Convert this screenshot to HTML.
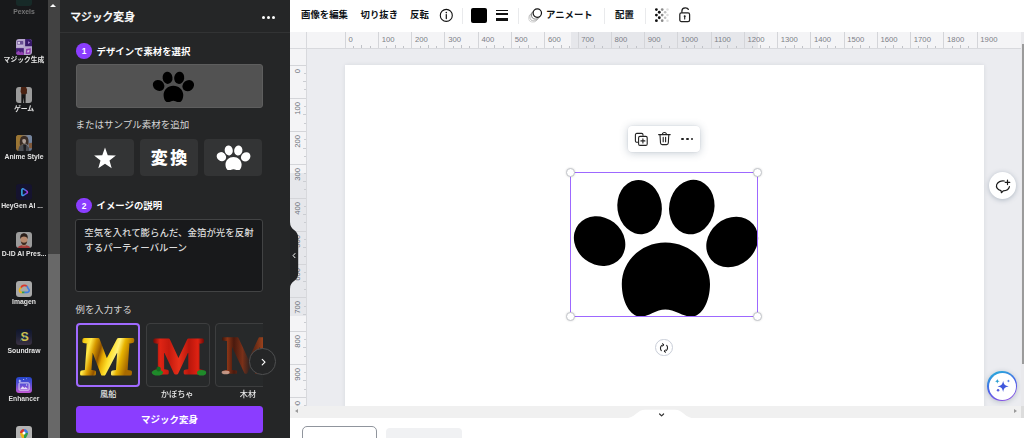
<!DOCTYPE html>
<html lang="ja"><head><meta charset="utf-8"><title>マジック変身</title>
<style>
*{box-sizing:border-box;margin:0;padding:0}
html,body{width:1024px;height:438px;overflow:hidden;background:#fff}
body{font-family:"Liberation Sans","Noto Sans CJK JP",sans-serif;color:#fff}
#app{position:relative;width:1024px;height:438px;overflow:hidden;background:#fff}
.abs{position:absolute}
/* sidebar */
#side{position:absolute;left:0;top:0;width:48.2px;height:438px;background:#18191b}
#sbar{position:absolute;left:48.2px;top:0;width:11.8px;height:438px;background:#424242}
#sbar .sth{position:absolute;left:0;top:254px;width:11.8px;height:184px;background:#686868}
#sbar .arr{position:absolute;left:2px;top:3.6px;width:0;height:0;border-left:3.7px solid transparent;border-right:3.7px solid transparent;border-bottom:3.8px solid #fff}
.it{position:absolute;left:0;width:49px;text-align:center}
.it .ic{position:absolute;left:16.1px;top:0;width:16.2px;height:16.2px;border-radius:3px;overflow:hidden}
.it .ic svg{position:absolute;left:0;top:0;width:16.2px;height:16.2px}
.it .lb{will-change:transform;position:absolute;left:-5.9px;width:60px;top:16.9px;font-size:6.8px;font-weight:700;line-height:9px;white-space:nowrap;color:#e4e4e4;text-align:center}
/* panel */
#panel{position:absolute;left:60px;top:0;width:230px;height:438px;background:#252627}
.ptitle{position:absolute;left:10.2px;top:9.1px;font-size:10.8px;line-height:16px;font-weight:500;-webkit-text-stroke:.25px #fff;color:#fff;white-space:nowrap}
.pdots{position:absolute;left:202px;top:15.6px;width:14px;height:3px}
.pdots i{position:absolute;top:0;width:3px;height:3px;border-radius:50%;background:#fff}
.pdots i:nth-child(1){left:0}.pdots i:nth-child(2){left:5px}.pdots i:nth-child(3){left:10px}
.psep{position:absolute;left:0;top:31.5px;width:230px;height:1.3px;background:#323334}
.step{position:absolute;left:16.2px;width:15.6px;height:15.6px;border-radius:50%;background:#8b3dff;color:#fff;font-size:8.4px;font-weight:700;line-height:17px;text-align:center}
.steplb{position:absolute;left:36.6px;font-size:9.4px;font-weight:700;line-height:14px;color:#fff;white-space:nowrap}
.upbox{position:absolute;left:15.6px;top:64px;width:187px;height:43.6px;background:#525252;border-radius:3px;border:1px solid #5e5e5e}
.sublb{position:absolute;left:15.6px;font-size:9.4px;line-height:13px;color:#d6d6d6;white-space:nowrap}
.sbtn{position:absolute;top:138.5px;width:58.4px;height:37.2px;border-radius:4px;background:#333435;overflow:hidden}
.henkan{position:absolute;left:0;top:0;width:58.4px;height:36.4px;text-align:center;font-size:17px;line-height:36px;font-weight:900;color:#fff;letter-spacing:2.4px;padding-left:2.4px;font-family:"Noto Sans CJK JP",sans-serif}
.tarea{position:absolute;left:15.4px;top:219px;width:187.3px;height:72.5px;background:#18191b;border:1px solid #424344;border-radius:3px;padding:6.4px 0 0 7.9px;font-weight:500;font-size:9.45px;line-height:14.3px;color:#dcdcdc;white-space:nowrap;overflow:hidden}
.thumb{position:absolute;top:323px;height:63.6px;border-radius:4px;overflow:hidden;background:#27292a}
.thumb svg{position:absolute;left:0;top:0}
.t1{left:16.2px;width:64px;border:2px solid #a06aff}
.t1 svg{left:-.8px;top:-1px}
.t2{left:85.7px;width:64.5px;border:1px solid #3d3e3f}
.t3{left:155px;width:64.5px;border:1px solid #3d3e3f}
.M{position:absolute;left:0;top:0;width:100%;text-align:center;font-family:"Liberation Serif",serif;font-weight:700;font-size:52px;line-height:60px;letter-spacing:-1px}
.tlb{position:absolute;top:388.5px;width:40px;text-align:center;font-weight:500;font-size:8.2px;line-height:11px;color:#e6e6e6;white-space:nowrap}
.tfade{position:absolute;left:202.5px;top:320px;width:28.4px;height:84px;background:#252627}
.tnext{position:absolute;left:189.4px;top:348.3px;width:26.4px;height:26.4px;border-radius:50%;background:#252627;border:1px solid #4e4f50}
.tnext svg{position:absolute;left:-.8px;top:-.8px}
.gobtn{position:absolute;left:16.2px;top:405.9px;width:186.4px;height:27.2px;border-radius:3.5px;background:#8b3dff;color:#fff;font-size:9.5px;font-weight:700;line-height:27px;text-align:center}
#phandle{z-index:5;position:absolute;left:289.5px;top:222px;width:10px;height:67px}
#topbar{position:absolute;left:290px;top:0;width:734px;height:32px;background:#fff}
#topbar > *{position:absolute}
#topbar .abs,#topbar .tb,#topbar .tsep{margin-left:-290px}
.tb{top:8px;font-size:9.4px;line-height:14px;font-weight:700;color:#0d1216;white-space:nowrap}
.tsep{top:8px;width:1px;height:16px;background:#e9eaec}
#cv{position:absolute;left:290px;top:32px;width:734px;height:374px;background:#ebecf0;overflow:hidden}
#page{position:absolute;left:55.2px;top:33px;width:638.6px;height:360px;background:#fff;box-shadow:0 0 4px rgba(40,50,70,.10)}
#hruler{position:absolute;left:306.5px;top:32px;width:714.5px;height:16.5px;background:#f4f4f6;border-bottom:1px solid #d8d9dd;overflow:hidden}
#hruler > *{position:absolute;margin-left:-306.5px}
.hsel{left:570.5px;top:0;width:187.5px;height:16px;background:#e6e7eb}
.hmaj{top:0;width:1px;height:16px;background:#d4d5d9}
.hmin{bottom:0;width:1px;background:#c0c2c7}
.hlab{top:3.9px;font-size:7.7px;line-height:8px;color:#7d8087;white-space:nowrap}
#vruler{position:absolute;left:290px;top:48.5px;width:16.5px;height:357.5px;background:#f4f4f6;border-right:1px solid #d8d9dd;overflow:hidden}
#vruler > *{position:absolute;margin-top:-48.5px}
.vsel{top:172.8px;left:0;width:16px;height:143.7px;background:#e6e7eb}
.vmaj{left:0;height:1px;width:16px;background:#d4d5d9}
.vmin{right:0;height:1px;background:#cbcdd2}
.vlab{left:4.2px;font-size:7.7px;line-height:8px;color:#6b7079;white-space:nowrap;writing-mode:vertical-rl;transform:rotate(180deg);transform-origin:center}
#rcorner{position:absolute;left:290px;top:32px;width:17px;height:17px;background:#f4f4f6;border-right:1px solid #d8d9dd;border-bottom:1px solid #d8d9dd}
#selbox{position:absolute;left:569.8px;top:172.1px;width:188.6px;height:144.9px;border:1.45px solid #9d68ff}
.hd{position:absolute;width:9px;height:9px;border-radius:50%;background:#fff;border:.8px solid #c2c5ca;box-shadow:0 0 2px rgba(0,0,0,.18)}
#rot{position:absolute;left:655.2px;top:338.7px;width:17.4px;height:17.4px;border-radius:50%;background:#fff;border:.9px solid #c9ced8}
#rot svg{position:absolute;left:-1.2px;top:-1.2px}
#ftb{position:absolute;left:628px;top:125.8px;width:72px;height:26.3px;border-radius:4px;background:#fff;box-shadow:0 0 0 .5px rgba(64,87,109,.07),0 1px 8px rgba(64,87,109,.3)}
#ftb i{position:absolute;top:11.8px;width:2.9px;height:2.9px;border-radius:50%;background:#222}
#fab1{position:absolute;left:989.2px;top:172.2px;width:26.8px;height:26.8px;border-radius:50%;background:#fff;box-shadow:0 1px 5px rgba(64,87,109,.35)}
#fab2{position:absolute;left:987.4px;top:371.3px;width:29.6px;height:29.6px;border-radius:50%;background:linear-gradient(160deg,#22b8d8 0%,#4a63e8 50%,#9a4fe0 100%);box-shadow:0 1px 5px rgba(64,87,109,.3)}
#fab2 .in{position:absolute;left:1.3px;top:1.3px;width:27px;height:27px;border-radius:50%;background:#fff}
#fab2 svg{position:absolute;left:-3.4px;top:-3.6px}
#vscroll{position:absolute;left:1021px;top:32px;width:3px;height:374px;background:#e9e9ec}
#vscroll .th{position:absolute;left:1px;top:11.5px;width:2px;height:320.5px;background:#9b9b9b}
#hscroll{position:absolute;left:290px;top:406px;width:731px;height:11.6px;background:#f0f0f0}
#hscroll .la{position:absolute;left:5px;top:3.2px;width:0;height:0;border-top:2.7px solid transparent;border-bottom:2.7px solid transparent;border-right:3.4px solid #9a9a9a}
#hscroll .ra{position:absolute;left:723.6px;top:3.2px;width:0;height:0;border-top:2.7px solid transparent;border-bottom:2.7px solid transparent;border-left:3.4px solid #9a9a9a}
#hcorner{position:absolute;left:1021px;top:406px;width:3px;height:11.6px;background:#dcdcdc}
#bbar{position:absolute;left:290px;top:417.6px;width:734px;height:20.4px;background:#fff}
.pg1{position:absolute;left:12px;top:8.2px;width:75px;height:20px;border:1.4px solid #90959d;border-radius:5px;background:#fff}
.pg2{position:absolute;left:95.6px;top:10.6px;width:76.2px;height:20px;border-radius:4px;background:#f0f1f3}

</style></head>
<body>
<div id="app">
<div id="side">
  <div class="it" style="top:-9.9px;opacity:.5">
    <div class="ic" style="background:#173d36"></div>
    <div class="lb" style="top:17.2px;color:#cfcfcf">Pexels</div>
  </div>
  <div class="it" style="top:38.5px">
    <div class="ic" style="filter:saturate(.75);background:#b8a2d8">
      <svg width="17" height="17" viewBox="0 0 17 17">
        <rect x="9.6" y="0" width="7.4" height="7.6" fill="#3d1480"/>
        <path d="M12.6 2.4 L15 3.8 L12.6 5.2Z" fill="#a777e0"/>
        <rect x="0" y="9.6" width="8.2" height="7.4" fill="#491a8c"/>
        <path d="M0 17 L0 14.6 L2.6 12.4 L4.6 14.2 L6 13 L8.2 15 L8.2 17Z" fill="#a53bd0"/>
        <rect x="1.2" y="2.2" width="6.4" height="3.6" rx=".6" fill="#6d4aa6"/>
        <rect x="1.8" y="2.9" width="2.4" height="2.2" fill="#d9c9ee"/>
        <rect x="1.2" y="6.8" width="6.4" height="1" fill="#d2c2ea"/>
        <path d="M10.6 10.4 L15.6 9.8 L15.2 15.4 L10.2 15.8Z" fill="#a233c8"/>
        <path d="M12 12 L14.2 11.6 L13.8 14 L11.6 14.2Z" fill="#d9b5ee"/>
      </svg>
    </div>
    <div class="lb">マジック生成</div>
  </div>
  <div class="it" style="top:86.9px">
    <div class="ic" style="background:#9b9b9b">
      <svg width="17" height="17" viewBox="0 0 17 17">
        <path d="M5.4 0 L10.6 0 L11.6 3 L11 7 L9.6 8.2 L6 8.2 L4.8 5Z" fill="#4a2212"/>
        <path d="M5.6 7.6 L10.2 7.6 L10 17 L8.6 17 L8.2 11 L7.4 17 L5.6 17Z" fill="#141414"/>
        <path d="M10.6 3 L11.8 6.6 L11 7.2Z" fill="#2a130b"/>
      </svg>
    </div>
    <div class="lb">ゲーム</div>
  </div>
  <div class="it" style="top:135.3px">
    <div class="ic" style="filter:brightness(.82) saturate(.8);background:linear-gradient(90deg,#c98a2e 0%,#b98a3a 30%,#8f94a8 70%,#7d94bd 100%)">
      <svg width="17" height="17" viewBox="0 0 17 17">
        <path d="M0 0 L5 0 L4 9 L0 12Z" fill="#c88f2a"/>
        <path d="M12 0 L17 0 L17 8 L13 8Z" fill="#8aa3c9"/>
        <path d="M13 9 L17 8 L17 14 L14 14Z" fill="#a66a3a"/>
        <path d="M5 2.6 C6 .6 11 .2 12.4 3 C13.6 5.6 13.4 9 12.4 10.4 L10 8.6 L6.6 9.4 L4.4 11.6 C3.6 8 4 4.6 5 2.6Z" fill="#4a362c"/>
        <path d="M6.6 5 C7.6 4 9.6 4 10.4 5.2 C10.8 7 10 9 8.6 9.2 C7.2 9 6.4 7 6.6 5Z" fill="#d9c2b4"/>
        <path d="M2 17 L3.4 12 L7 9.6 L11 10.4 L13.6 13 L14 17Z" fill="#5b5e66"/>
        <path d="M7.6 9.6 L10.8 10.2 L10.4 17 L8 17Z" fill="#26262c"/>
      </svg>
    </div>
    <div class="lb">Anime Style</div>
  </div>
  <div class="it" style="top:183.7px">
    <div class="ic" style="background:#15132f">
      <svg width="17" height="17" viewBox="0 0 17 17">
        <defs><linearGradient id="hg" x1="0" y1="0" x2="1" y2="0"><stop offset="0" stop-color="#35b6e6"/><stop offset=".55" stop-color="#4a63e8"/><stop offset="1" stop-color="#b236d6"/></linearGradient></defs>
        <path d="M6.2 6 C6.2 5.1 7.1 4.7 7.8 5.1 L11.4 7.5 C12.2 8 12.2 9.1 11.4 9.6 L7.8 12 C7.1 12.4 6.2 12 6.2 11.1Z" fill="none" stroke="url(#hg)" stroke-width="1.6" stroke-linejoin="round"/>
      </svg>
    </div>
    <div class="lb" style="left:-7.7px">HeyGen AI ...</div>
  </div>
  <div class="it" style="top:232.1px">
    <div class="ic" style="background:#9c9c9c">
      <svg width="17" height="17" viewBox="0 0 17 17">
        <path d="M1.6 17 C2.6 14.6 5 14 8.4 14 C11.8 14 14.2 14.6 15.2 17Z" fill="#a53a3a"/>
        <path d="M6.6 12 L10.2 12 L10.4 15 L6.4 15Z" fill="#a87a60"/>
        <ellipse cx="8.4" cy="8" rx="3.7" ry="4.9" fill="#b88a6e"/>
        <path d="M4.6 7.6 C3.8 3.6 5.8 1.4 8.4 1.4 C11 1.4 13 3.6 12.2 7.6 C11.8 5.4 10.6 4.6 8.4 4.6 C6.2 4.6 5 5.4 4.6 7.6Z" fill="#2b1e19"/>
        <path d="M5 9 C5.2 12.4 6.6 13.6 8.4 13.6 C10.2 13.6 11.6 12.4 11.8 9 C11.2 11 10.2 11.2 8.4 11.2 C6.6 11.2 5.6 11 5 9Z" fill="#3a2a22"/>
      </svg>
    </div>
    <div class="lb">D-ID AI Pres...</div>
  </div>
  <div class="it" style="top:280.5px">
    <div class="ic" style="background:#a9a9a9">
      <svg width="17" height="17" viewBox="0 0 17 17">
        <path d="M5.2 7.4 C5.8 5.4 7.2 4.6 8.8 4.6 C10 4.6 10.8 5 11.6 5.8" fill="none" stroke="#d8372c" stroke-width="1.7"/>
        <path d="M11.2 5.4 C12.4 6.4 12.6 7.2 12.8 8 C14 8.6 14.2 10.2 13.4 11.2 C12.8 11.8 12.2 12 11.4 12 L8.6 12" fill="none" stroke="#3f7de0" stroke-width="1.7"/>
        <path d="M8.8 12 L6 12" fill="none" stroke="#2e9c4c" stroke-width="1.7"/>
        <path d="M6.2 12 C4.6 12 3.6 11 3.6 9.6 C3.6 8.2 4.4 7.4 5.6 7.2" fill="none" stroke="#e9b21a" stroke-width="1.7"/>
      </svg>
    </div>
    <div class="lb">Imagen</div>
  </div>
  <div class="it" style="top:328.9px">
    <div class="ic" style="background:linear-gradient(180deg,#10162b 0%,#1d2036 45%,#3b3242 100%)">
      <div style="position:absolute;left:0;top:.6px;width:17px;text-align:center;font:700 12.5px/16px 'Liberation Sans',sans-serif;color:#cdbf4e">S</div>
      <svg width="17" height="17" viewBox="0 0 17 17" style="position:absolute;left:0;top:0"><path d="M4.4 12 L12.6 5" stroke="#3f8fa6" stroke-width=".8" fill="none"/></svg>
    </div>
    <div class="lb">Soundraw</div>
  </div>
  <div class="it" style="top:377.3px">
    <div class="ic" style="background:linear-gradient(180deg,#2244c8 0%,#5a4fd6 45%,#c45ad4 100%)">
      <svg width="17" height="17" viewBox="0 0 17 17">
        <rect x="3.2" y="6.2" width="10.6" height="7.6" rx=".8" fill="none" stroke="#e6dcf6" stroke-width="1"/>
        <path d="M4.4 12.6 L7 9.6 L8.8 11.6 L10 10.6 L12.6 12.6Z" fill="#e6dcf6"/>
        <path d="M4 2.4 L4.5 3.7 L5.8 4.2 L4.5 4.7 L4 6 L3.5 4.7 L2.2 4.2 L3.5 3.7Z" fill="#dfe3fb"/>
        <circle cx="8" cy="2.6" r=".6" fill="#cdd3f8"/><circle cx="11" cy="1.8" r=".5" fill="#cdd3f8"/>
        <path d="M11.2 7.4 L11.5 8.1 L12.2 8.4 L11.5 8.7 L11.2 9.4 L10.9 8.7 L10.2 8.4 L10.9 8.1Z" fill="#fff"/>
      </svg>
    </div>
    <div class="lb" style="color:#dedede">Enhancer</div>
  </div>
  <div class="it" style="top:425.7px">
    <div class="ic" style="background:#b3b3b3">
      <svg width="17" height="17" viewBox="0 0 17 17">
        <path d="M8.4 3.2 C5.8 3.2 4.2 5.2 4.2 7.4 L8.4 7.4Z" fill="#d8372c"/>
        <path d="M8.4 3.2 C11 3.2 12.6 5.2 12.6 7.4 L8.4 7.4Z" fill="#3f7de0"/>
        <path d="M4.2 7.4 C4.2 9.6 6 11.4 8.4 16 L8.4 7.4Z" fill="#e9b21a"/>
        <path d="M12.6 7.4 C12.6 9.6 10.8 11.4 8.4 16 L8.4 7.4Z" fill="#2e9c4c"/>
        <circle cx="8.4" cy="7.4" r="1.6" fill="#fff"/>
      </svg>
    </div>
  </div>
</div>
<div id="sbar"><div class="arr"></div><div class="sth"></div></div>

<div id="panel">
  <div class="ptitle">マジック変身</div>
  <div class="pdots"><i></i><i></i><i></i></div>
  <div class="psep"></div>

  <div class="step" style="top:43.2px">1</div>
  <div class="steplb" style="top:44.5px">デザインで素材を選択</div>

  <div class="upbox">
    <svg class="abs" style="left:75.6px;top:4.6px" width="42" height="32.4" viewBox="570 172 188 145">
      <use href="#pawshape" fill="#000"/>
    </svg>
  </div>

  <div class="sublb" style="top:117.9px;font-size:9.5px">またはサンプル素材を追加</div>

  <div class="sbtn" style="left:15.8px">
    <svg width="58" height="36" viewBox="0 0 58 36"><path d="M29 8.6 L31.75 16.2 L39.9 16.5 L33.5 21.5 L35.7 29.3 L29 24.8 L22.3 29.3 L24.5 21.5 L18.1 16.5 L26.25 16.2Z" fill="#fff"/></svg>
  </div>
  <div class="sbtn" style="left:79.8px"><span class="henkan">変換</span></div>
  <div class="sbtn" style="left:143.9px">
    <svg class="abs" style="left:12.6px;top:5.4px" width="34.4" height="26.6" viewBox="570 172 188 145">
      <use href="#pawshape" fill="#fff"/>
    </svg>
  </div>

  <div class="step" style="top:197.6px">2</div>
  <div class="steplb" style="top:199.2px">イメージの説明</div>

  <div class="tarea">空気を入れて膨らんだ、金箔が光を反射<br>するパーティーバルーン</div>

  <div class="sublb" style="top:303px">例を入力する</div>

  <div class="thumb t1"><svg width="62" height="62" viewBox="0 0 62 62">
    <defs>
      <linearGradient id="gd" x1="0" y1="0" x2="1" y2="0.25">
        <stop offset="0" stop-color="#b87a00"/><stop offset=".08" stop-color="#f6cf12"/><stop offset=".2" stop-color="#ffe94a"/><stop offset=".3" stop-color="#d89a00"/><stop offset=".42" stop-color="#8f5200"/><stop offset=".5" stop-color="#e3a600"/><stop offset=".62" stop-color="#ffe02a"/><stop offset=".74" stop-color="#fff27a"/><stop offset=".84" stop-color="#e8b400"/><stop offset="1" stop-color="#a86a00"/>
      </linearGradient>
    </defs>
    <text x="30.5" y="50" text-anchor="middle" font-family="'Liberation Serif',serif" font-weight="700" font-size="52.5" textLength="51" transform="translate(2.2 0) skewX(-4)" lengthAdjust="spacingAndGlyphs" fill="url(#gd)" stroke="url(#gd)" stroke-width="3.2" stroke-linejoin="round">M</text>
  </svg></div>
  <div class="thumb t2"><svg width="63" height="62" viewBox="0 0 63 62">
    <defs>
      <linearGradient id="rd" x1="0" y1="0" x2="1" y2="0">
        <stop offset="0" stop-color="#7a0d08"/><stop offset=".12" stop-color="#e02414"/><stop offset=".3" stop-color="#c41a0e"/><stop offset=".5" stop-color="#e8301a"/><stop offset=".7" stop-color="#b8160c"/><stop offset=".88" stop-color="#df2212"/><stop offset="1" stop-color="#6e0b06"/>
      </linearGradient>
    </defs>
    <text x="32" y="48.6" text-anchor="middle" font-family="'Liberation Serif',serif" font-weight="700" font-size="51.5" textLength="50" lengthAdjust="spacingAndGlyphs" fill="url(#rd)" stroke="url(#rd)" stroke-width="3" stroke-linejoin="round">M</text>
    <ellipse cx="10.4" cy="48.6" rx="5.6" ry="3" fill="#1f8a2a"/><ellipse cx="11.6" cy="45" rx="2.2" ry="2.6" fill="#166a20"/>
    <ellipse cx="54.6" cy="48.8" rx="4.6" ry="2.8" fill="#1f8a2a"/>
  </svg></div>
  <div class="thumb t3"><svg width="63" height="62" viewBox="0 0 63 62">
    <defs>
      <linearGradient id="wd" x1="0" y1="0" x2="1" y2="0">
        <stop offset="0" stop-color="#3a140a"/><stop offset=".1" stop-color="#8a3516"/><stop offset=".22" stop-color="#4a1a0e"/><stop offset=".38" stop-color="#7a3018"/><stop offset=".5" stop-color="#352420"/><stop offset=".62" stop-color="#6a2c16"/><stop offset=".8" stop-color="#a8481e"/><stop offset="1" stop-color="#4a1a0c"/>
      </linearGradient>
    </defs>
    <text x="33" y="49.4" text-anchor="middle" font-family="'Liberation Serif',serif" font-weight="700" font-size="53" textLength="54" lengthAdjust="spacingAndGlyphs" fill="url(#wd)" stroke="url(#wd)" stroke-width="1.4" stroke-linejoin="round">M</text>
    <ellipse cx="9.6" cy="48.4" rx="4" ry="1.8" fill="#d8b0a0" opacity=".8"/>
  </svg></div>
  <div class="tlb" style="left:28.2px">風船</div>
  <div class="tlb" style="left:97.2px">かぼちゃ</div>
  <div class="tlb" style="left:168px">木材</div>
  <div class="tfade"></div>
  <div class="tnext"><svg width="26" height="26" viewBox="0 0 26 26"><path d="M12.2 10.3 L15 13.1 L12.2 15.9" fill="none" stroke="#fff" stroke-width="1.15" stroke-linecap="round" stroke-linejoin="round"/></svg></div>

  <div class="gobtn">マジック変身</div>
</div>
<div id="phandle">
  <svg width="10" height="67" viewBox="0 0 10 67"><path d="M0 0 C0 9 8.2 7 8.2 16 L8.2 51 C8.2 60 0 58 0 67Z" fill="#222325"/><path d="M5 31.5 L3.1 33.6 L5 35.7" fill="none" stroke="#fff" stroke-width="1" stroke-linecap="round" stroke-linejoin="round"/></svg>
</div>

<svg width="0" height="0" style="position:absolute"><defs>
  <g id="pawshape">
    <ellipse cx="599.6" cy="241.1" rx="27" ry="23.5" transform="rotate(38 599.6 241.1)"/>
    <ellipse cx="639.6" cy="207.1" rx="22.2" ry="27.2" transform="rotate(-8 639.6 207.1)"/>
    <ellipse cx="691.8" cy="207.1" rx="22.6" ry="27.4" transform="rotate(10 691.8 207.1)"/>
    <ellipse cx="732.2" cy="242" rx="27.5" ry="23.5" transform="rotate(-40 732.2 242)"/>
    <path id="mainpad" d="M665.3 242.5 C690 242.5 710 261.1 710 284 C710 301.95 701.7 316.6 691.4 316.6 C683.4 316.6 674.3 309.4 665.3 309.4 C656.3 309.4 648.6 316.6 640.6 316.6 C630.2 316.6 621.8 301.95 621.8 284 C621.8 261.1 641.3 242.5 665.3 242.5Z"/>
  </g>
</defs></svg>
<div id="topbar">
  <span class="tb" style="left:301px">画像を編集</span>
  <span class="tb" style="left:360.5px">切り抜き</span>
  <span class="tb" style="left:410px">反転</span>
  <svg class="abs" style="left:438px;top:7px" width="17" height="17" viewBox="0 0 17 17"><circle cx="8.3" cy="8.4" r="6" fill="none" stroke="#111" stroke-width="1.1"/><circle cx="8.3" cy="5.6" r=".8" fill="#111"/><path d="M8.3 7.6 V11.6" stroke="#111" stroke-width="1.2" stroke-linecap="round"/></svg>
  <div class="tsep" style="left:462px"></div>
  <div class="abs" style="left:471.1px;top:7.6px;width:16.1px;height:15.9px;border-radius:2px;background:#000"></div>
  <div class="abs" style="left:496.3px;top:10.3px;width:12.2px;height:1.1px;background:#111"></div>
  <div class="abs" style="left:496.3px;top:13px;width:12.2px;height:1.9px;background:#111"></div>
  <div class="abs" style="left:496.3px;top:17.5px;width:12.2px;height:3.4px;background:#111"></div>
  <div class="tsep" style="left:518.4px"></div>
  <svg class="abs" style="left:527px;top:7px" width="17" height="17" viewBox="0 0 17 17">
    <circle cx="5.8" cy="11" r="4.1" fill="#fff" stroke="#c4c4c4" stroke-width=".7"/>
    <circle cx="7" cy="9.8" r="4.1" fill="#fff" stroke="#999" stroke-width=".7"/>
    <circle cx="8.6" cy="8" r="4.1" fill="#fff" stroke="#666" stroke-width=".8"/>
    <circle cx="10.3" cy="6.1" r="4.2" fill="#fff" stroke="#111" stroke-width="1.2"/>
  </svg>
  <span class="tb" style="left:546px">アニメート</span>
  <div class="tsep" style="left:604px"></div>
  <span class="tb" style="left:615px">配置</span>
  <div class="tsep" style="left:645px"></div>
  <svg class="abs" style="left:654.6px;top:8.4px" width="14" height="14.4" viewBox="0 0 14 14.4">
    <g fill="#111"><circle cx="1.4" cy="1.56" r="1.42"/><circle cx="1.4" cy="7.07" r="1.42"/><circle cx="1.4" cy="12.7" r="1.42"/><circle cx="4.3" cy="4.26" r="1.42"/><circle cx="4.3" cy="9.77" r="1.42"/></g>
    <g fill="#8c8c8c"><circle cx="7.2" cy="1.56" r="1.35"/><circle cx="7.2" cy="7.07" r="1.35"/><circle cx="7.2" cy="12.7" r="1.35"/></g>
    <g fill="#c2c2c2"><circle cx="10.15" cy="4.26" r="1.3"/><circle cx="10.15" cy="9.77" r="1.3"/></g>
    <g fill="#dedede"><circle cx="12.5" cy="1.56" r="1.25"/><circle cx="12.5" cy="7.07" r="1.25"/><circle cx="12.5" cy="12.7" r="1.25"/></g>
  </svg>
  <svg class="abs" style="left:677px;top:6.5px" width="16" height="17" viewBox="0 0 16 17">
    <rect x="2.8" y="5.8" width="9.8" height="8.8" rx="1.6" fill="none" stroke="#222" stroke-width="1.25"/>
    <path d="M4.9 5.8 V3.9 C4.9 0 11.4 0 11.4 3.1" fill="none" stroke="#222" stroke-width="1.25" stroke-linecap="butt"/>
    <circle cx="7.7" cy="9.2" r="1" fill="#222"/><path d="M7.7 9.4 V12" stroke="#222" stroke-width="1.1" stroke-linecap="round"/>
  </svg>
</div>

<div id="cv">
  <div id="page"></div>
</div>
<div id="hruler"><div class="hsel"></div><div class="hmaj" style="left:344.70px"></div><span class="hlab" style="left:348.40px">0</span><div class="hmin" style="left:353.01px;height:2px"></div><div class="hmin" style="left:361.33px;height:3px"></div><div class="hmin" style="left:369.64px;height:2px"></div><div class="hmaj" style="left:377.96px"></div><span class="hlab" style="left:381.66px">100</span><div class="hmin" style="left:386.27px;height:2px"></div><div class="hmin" style="left:394.59px;height:3px"></div><div class="hmin" style="left:402.90px;height:2px"></div><div class="hmaj" style="left:411.22px"></div><span class="hlab" style="left:414.92px">200</span><div class="hmin" style="left:419.53px;height:2px"></div><div class="hmin" style="left:427.85px;height:3px"></div><div class="hmin" style="left:436.16px;height:2px"></div><div class="hmaj" style="left:444.48px"></div><span class="hlab" style="left:448.18px">300</span><div class="hmin" style="left:452.80px;height:2px"></div><div class="hmin" style="left:461.11px;height:3px"></div><div class="hmin" style="left:469.43px;height:2px"></div><div class="hmaj" style="left:477.74px"></div><span class="hlab" style="left:481.44px">400</span><div class="hmin" style="left:486.06px;height:2px"></div><div class="hmin" style="left:494.37px;height:3px"></div><div class="hmin" style="left:502.69px;height:2px"></div><div class="hmaj" style="left:511.00px"></div><span class="hlab" style="left:514.70px">500</span><div class="hmin" style="left:519.32px;height:2px"></div><div class="hmin" style="left:527.63px;height:3px"></div><div class="hmin" style="left:535.95px;height:2px"></div><div class="hmaj" style="left:544.26px"></div><span class="hlab" style="left:547.96px">600</span><div class="hmin" style="left:552.58px;height:2px"></div><div class="hmin" style="left:560.89px;height:3px"></div><div class="hmin" style="left:569.21px;height:2px"></div><div class="hmaj" style="left:577.52px"></div><span class="hlab" style="left:581.22px">700</span><div class="hmin" style="left:585.84px;height:2px"></div><div class="hmin" style="left:594.15px;height:3px"></div><div class="hmin" style="left:602.47px;height:2px"></div><div class="hmaj" style="left:610.78px"></div><span class="hlab" style="left:614.48px">800</span><div class="hmin" style="left:619.10px;height:2px"></div><div class="hmin" style="left:627.41px;height:3px"></div><div class="hmin" style="left:635.73px;height:2px"></div><div class="hmaj" style="left:644.04px"></div><span class="hlab" style="left:647.74px">900</span><div class="hmin" style="left:652.36px;height:2px"></div><div class="hmin" style="left:660.67px;height:3px"></div><div class="hmin" style="left:668.99px;height:2px"></div><div class="hmaj" style="left:677.30px"></div><span class="hlab" style="left:681.00px">1000</span><div class="hmin" style="left:685.62px;height:2px"></div><div class="hmin" style="left:693.93px;height:3px"></div><div class="hmin" style="left:702.25px;height:2px"></div><div class="hmaj" style="left:710.56px"></div><span class="hlab" style="left:714.26px">1100</span><div class="hmin" style="left:718.88px;height:2px"></div><div class="hmin" style="left:727.19px;height:3px"></div><div class="hmin" style="left:735.50px;height:2px"></div><div class="hmaj" style="left:743.82px"></div><span class="hlab" style="left:747.52px">1200</span><div class="hmin" style="left:752.13px;height:2px"></div><div class="hmin" style="left:760.45px;height:3px"></div><div class="hmin" style="left:768.76px;height:2px"></div><div class="hmaj" style="left:777.08px"></div><span class="hlab" style="left:780.78px">1300</span><div class="hmin" style="left:785.39px;height:2px"></div><div class="hmin" style="left:793.71px;height:3px"></div><div class="hmin" style="left:802.02px;height:2px"></div><div class="hmaj" style="left:810.34px"></div><span class="hlab" style="left:814.04px">1400</span><div class="hmin" style="left:818.65px;height:2px"></div><div class="hmin" style="left:826.97px;height:3px"></div><div class="hmin" style="left:835.28px;height:2px"></div><div class="hmaj" style="left:843.60px"></div><span class="hlab" style="left:847.30px">1500</span><div class="hmin" style="left:851.91px;height:2px"></div><div class="hmin" style="left:860.23px;height:3px"></div><div class="hmin" style="left:868.54px;height:2px"></div><div class="hmaj" style="left:876.86px"></div><span class="hlab" style="left:880.56px">1600</span><div class="hmin" style="left:885.17px;height:2px"></div><div class="hmin" style="left:893.49px;height:3px"></div><div class="hmin" style="left:901.80px;height:2px"></div><div class="hmaj" style="left:910.12px"></div><span class="hlab" style="left:913.82px">1700</span><div class="hmin" style="left:918.43px;height:2px"></div><div class="hmin" style="left:926.75px;height:3px"></div><div class="hmin" style="left:935.06px;height:2px"></div><div class="hmaj" style="left:943.38px"></div><span class="hlab" style="left:947.08px">1800</span><div class="hmin" style="left:951.69px;height:2px"></div><div class="hmin" style="left:960.01px;height:3px"></div><div class="hmin" style="left:968.32px;height:2px"></div><div class="hmaj" style="left:976.64px"></div><span class="hlab" style="left:980.34px">1900</span></div>
<div id="vruler"><div class="vsel"></div><div class="vmaj" style="top:64.50px"></div><span class="vlab" style="top:68.60px">0</span><div class="vmin" style="top:72.81px;width:2px"></div><div class="vmin" style="top:81.13px;width:3px"></div><div class="vmin" style="top:89.44px;width:2px"></div><div class="vmaj" style="top:97.76px"></div><span class="vlab" style="top:101.86px">100</span><div class="vmin" style="top:106.07px;width:2px"></div><div class="vmin" style="top:114.39px;width:3px"></div><div class="vmin" style="top:122.70px;width:2px"></div><div class="vmaj" style="top:131.02px"></div><span class="vlab" style="top:135.12px">200</span><div class="vmin" style="top:139.33px;width:2px"></div><div class="vmin" style="top:147.65px;width:3px"></div><div class="vmin" style="top:155.96px;width:2px"></div><div class="vmaj" style="top:164.28px"></div><span class="vlab" style="top:168.38px">300</span><div class="vmin" style="top:172.59px;width:2px"></div><div class="vmin" style="top:180.91px;width:3px"></div><div class="vmin" style="top:189.22px;width:2px"></div><div class="vmaj" style="top:197.54px"></div><span class="vlab" style="top:201.64px">400</span><div class="vmin" style="top:205.85px;width:2px"></div><div class="vmin" style="top:214.17px;width:3px"></div><div class="vmin" style="top:222.48px;width:2px"></div><div class="vmaj" style="top:230.80px"></div><span class="vlab" style="top:234.90px">500</span><div class="vmin" style="top:239.11px;width:2px"></div><div class="vmin" style="top:247.43px;width:3px"></div><div class="vmin" style="top:255.75px;width:2px"></div><div class="vmaj" style="top:264.06px"></div><span class="vlab" style="top:268.16px">600</span><div class="vmin" style="top:272.38px;width:2px"></div><div class="vmin" style="top:280.69px;width:3px"></div><div class="vmin" style="top:289.00px;width:2px"></div><div class="vmaj" style="top:297.32px"></div><span class="vlab" style="top:301.42px">700</span><div class="vmin" style="top:305.63px;width:2px"></div><div class="vmin" style="top:313.95px;width:3px"></div><div class="vmin" style="top:322.26px;width:2px"></div><div class="vmaj" style="top:330.58px"></div><span class="vlab" style="top:334.68px">800</span><div class="vmin" style="top:338.89px;width:2px"></div><div class="vmin" style="top:347.21px;width:3px"></div><div class="vmin" style="top:355.52px;width:2px"></div><div class="vmaj" style="top:363.84px"></div><span class="vlab" style="top:367.94px">900</span><div class="vmin" style="top:372.15px;width:2px"></div><div class="vmin" style="top:380.47px;width:3px"></div><div class="vmin" style="top:388.78px;width:2px"></div><div class="vmaj" style="top:397.10px"></div><span class="vlab" style="top:401.20px">1000</span><div class="vmin" style="top:405.41px;width:2px"></div><div class="vmin" style="top:413.73px;width:3px"></div><div class="vmin" style="top:422.04px;width:2px"></div></div>
<div id="rcorner"></div>
<svg id="paw" class="abs" style="left:0;top:0" width="1024" height="438" viewBox="0 0 1024 438"><use href="#pawshape" fill="#000"/></svg>
<div id="selbox"></div>
<i class="hd" style="left:566px;top:168.3px"></i>
<i class="hd" style="left:753.3px;top:168.3px"></i>
<i class="hd" style="left:566px;top:311.8px"></i>
<i class="hd" style="left:753.3px;top:311.8px"></i>
<div id="rot"><svg width="18" height="18" viewBox="0 0 18 18">
  <path d="M6.3 11.6 C5 10 5.2 7.6 6.8 6.4 C7.4 6 8 5.8 8.6 5.8" fill="none" stroke="#222" stroke-width="1.1" stroke-linecap="round"/>
  <path d="M11.7 6.4 C13 8 12.8 10.4 11.2 11.6 C10.6 12 10 12.2 9.4 12.2" fill="none" stroke="#222" stroke-width="1.1" stroke-linecap="round"/>
  <path d="M7.6 4.6 L9 5.8 L7.6 7" fill="none" stroke="#222" stroke-width="1" stroke-linecap="round" stroke-linejoin="round"/>
  <path d="M10.4 11 L9 12.2 L10.4 13.4" fill="none" stroke="#222" stroke-width="1" stroke-linecap="round" stroke-linejoin="round"/>
</svg></div>
<div id="ftb">
  <svg class="abs" style="left:6px;top:6px" width="15" height="15" viewBox="0 0 15 15">
    <path d="M4 10.2 H2.8 C2 10.2 1.4 9.6 1.4 8.8 V2.8 C1.4 2 2 1.4 2.8 1.4 H7.6 C8.4 1.4 9 2 9 2.8 V3.8" fill="none" stroke="#222" stroke-width="1.1"/>
    <rect x="4.6" y="4.4" width="8.6" height="9" rx="1.4" fill="#fff" stroke="#222" stroke-width="1.1"/>
    <path d="M8.9 6.9 V10.9 M6.9 8.9 H10.9" stroke="#222" stroke-width="1.1" stroke-linecap="round"/>
  </svg>
  <svg class="abs" style="left:29.4px;top:5.4px" width="15" height="15" viewBox="0 0 15 15">
    <path d="M1.6 3.6 H13.2" stroke="#222" stroke-width="1.1" stroke-linecap="round"/>
    <path d="M5.4 3.4 C5.4 .8 9.4 .8 9.4 3.4" fill="none" stroke="#222" stroke-width="1.1"/>
    <path d="M3 3.8 L3.5 12 C3.6 13 4.2 13.6 5.2 13.6 H9.6 C10.6 13.6 11.2 13 11.3 12 L11.8 3.8" fill="none" stroke="#222" stroke-width="1.1"/>
    <path d="M6.2 6.4 V10.8 M8.6 6.4 V10.8" stroke="#222" stroke-width="1.1" stroke-linecap="round"/>
  </svg>
  <i style="left:53px"></i><i style="left:57.8px"></i><i style="left:62.6px"></i>
</div>
<div id="fab1"><svg width="27" height="27" viewBox="0 0 27 27">
  <path transform="translate(.7 .8)" d="M14.65 8.21 A6.5 5 0 0 0 11.29 17.86 L11.7 19.9 L13.53 18.1 A6.5 5 0 0 0 19.72 13.88" fill="none" stroke="#1a1a1a" stroke-width="1.2" stroke-linecap="round" stroke-linejoin="round"/>
  <path transform="translate(.4 .3)" d="M18.1 7.7 V12.3 M15.8 10 H20.4" stroke="#1a1a1a" stroke-width="1.2" stroke-linecap="round"/>
</svg></div>
<div id="fab2"><div class="in"><svg width="34" height="34" viewBox="0 0 27 27">
  <defs><linearGradient id="sp" x1="0" y1="0" x2="1" y2="1"><stop offset="0" stop-color="#2aa6d6"/><stop offset=".5" stop-color="#4a5fe0"/><stop offset="1" stop-color="#6a4fe0"/></linearGradient></defs>
  <path d="M14.4 9.4 C14.9 12.4 15.8 13.3 18.8 13.8 C15.8 14.3 14.9 15.2 14.4 18.2 C13.9 15.2 13 14.3 10 13.8 C13 13.3 13.9 12.4 14.4 9.4Z" fill="#3f57dc"/>
  <path d="M9.8 7.8 C10 9.2 10.4 9.6 11.8 9.8 C10.4 10 10 10.4 9.8 11.8 C9.6 10.4 9.2 10 7.8 9.8 C9.2 9.6 9.6 9.2 9.8 7.8Z" fill="#2a9ed0"/>
  <path d="M18.6 8.2 C18.7 9.2 19 9.5 20 9.6 C19 9.7 18.7 10 18.6 11 C18.5 10 18.2 9.7 17.2 9.6 C18.2 9.5 18.5 9.2 18.6 8.2Z" fill="#3f6fe0"/>
  <circle cx="10.4" cy="16.8" r="1" fill="#5a5fe0"/>
</svg></div></div>
<div id="vscroll"><div class="th"></div></div>
<div id="hscroll">
  <div class="la"></div><div class="ra"></div>
  <svg class="abs" style="left:335px;top:2.6px" width="74" height="10" viewBox="0 0 74 10"><path d="M0 9.4 C10 9.4 12 0.8 20 0.8 L50 0.8 C58 0.8 60 9.4 70 9.4 L74 9.4 L74 10 L0 10Z" fill="#fff"/><path d="M34.6 5 L36.6 6.9 L38.6 5" fill="none" stroke="#333" stroke-width="1.2" stroke-linecap="round" stroke-linejoin="round"/></svg>
</div>
<div id="hcorner"></div>
<div id="bbar">
  <div class="pg1"></div><div class="pg2"></div>
</div>

</div>
</body></html>
